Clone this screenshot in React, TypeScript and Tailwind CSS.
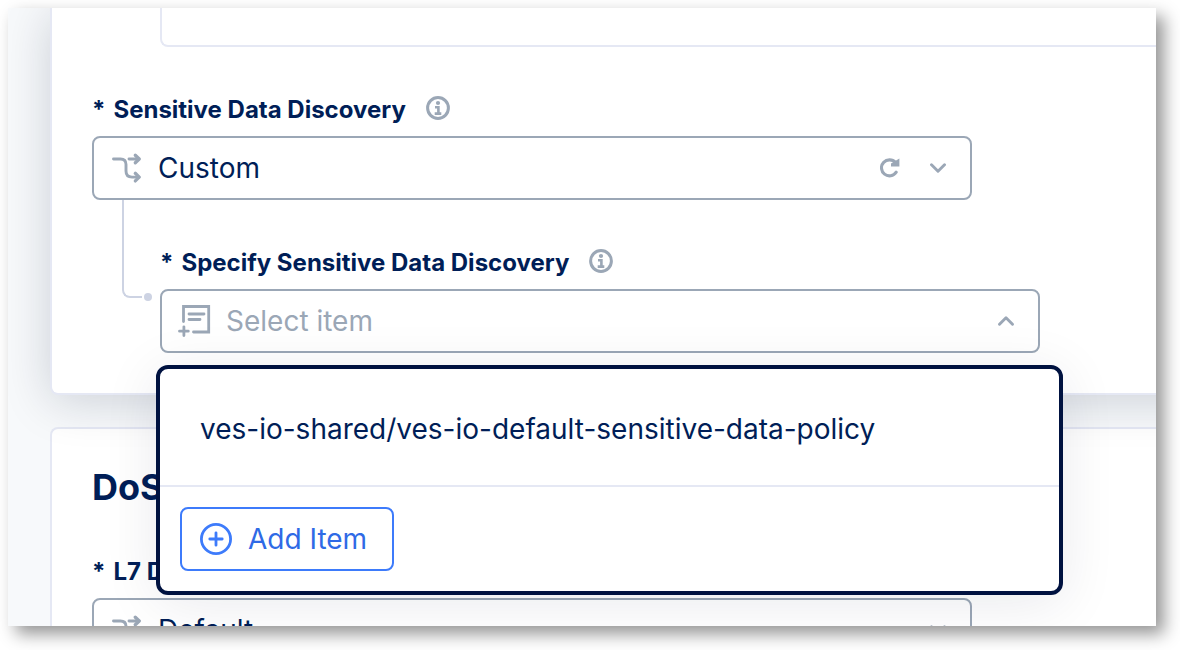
import React from "react";

function BranchIcon({ className = "" }: { className?: string }) {
  return (
    <svg viewBox="0 0 32 32" className={`size-8 ${className}`} fill="none" stroke="#9ba7b6" strokeWidth="2.9" strokeLinecap="round" strokeLinejoin="round" aria-hidden="true">
      <path d="M3.500 7H10.500C14.500 7 16 9 16 12.500V19C16 23 18 25.100 22 25.100H29" />
      <path d="M19 7H29" />
      <path d="M25.300 3.200L29.200 7L25.300 10.800" strokeWidth="3.300" />
      <path d="M25.300 21.300L29.200 25.100L25.300 28.900" strokeWidth="3.300" />
    </svg>
  );
}

function InfoIcon() {
  return (
    <svg viewBox="0 0 24 24" className="size-6" fill="none" stroke="#9ba7b6" strokeWidth="3" aria-hidden="true">
      <circle cx="12" cy="12" r="10.400" />
      <circle cx="12" cy="7" r="2.100" fill="#9ba7b6" stroke="none" />
      <path d="M9 11.200H12.400V17.500M8.700 17.600H15.300" strokeWidth="2.600" />
    </svg>
  );
}

function RefreshIcon() {
  return (
    <svg viewBox="0 0 20 20" className="size-5" fill="none" stroke="#9ba7b6" strokeWidth="3.100" strokeLinecap="round" aria-hidden="true">
      <path d="M16.200 14.200A8 8 0 1 1 15.500 4.600" />
      <path d="M19.400 0.400V8.600H11V5.500Z" fill="#9ba7b6" stroke="none" />
    </svg>
  );
}

function Chevron({ up = false }: { up?: boolean }) {
  return (
    <svg viewBox="0 0 16 16" className="size-4" fill="none" stroke="#9ba7b6" strokeWidth="2.900" strokeLinecap="round" strokeLinejoin="round" aria-hidden="true">
      <path d={up ? "M1.500 11.200L8 4.800L14.500 11.200" : "M1.500 4.800L8 11.200L14.500 4.800"} />
    </svg>
  );
}

function AddFormIcon() {
  return (
    <svg viewBox="0 0 34 34" className="size-[34px]" fill="none" stroke="#9ba7b6" strokeWidth="2.800" strokeLinecap="round" aria-hidden="true">
      <path d="M5.500 17.500V2.500H30.700V28H15.500" />
      <path d="M11 10H26M11 15.500H22" />
      <path d="M1.500 27.200H10.300M5.900 22.800V31.600" />
    </svg>
  );
}

function FieldLabel({ htmlFor, children, info = true }: { htmlFor: string; children: React.ReactNode; info?: boolean }) {
  return (
    <div className="mb-2 flex h-9 items-start gap-5">
      <label htmlFor={htmlFor} className="flex gap-2 text-2xl leading-9 font-bold whitespace-nowrap">
        <span aria-hidden="true">*</span>
        {children}
      </label>
      {info && (
        <button type="button" aria-label="More information" className="mt-1">
          <InfoIcon />
        </button>
      )}
    </div>
  );
}

function ChoiceField({ id, value, refresh = false }: { id: string; value: string; refresh?: boolean }) {
  return (
    <div className="grid h-16 max-w-[880px] items-center">
      <select
        id={id}
        defaultValue={value}
        className="col-start-1 row-start-1 h-16 w-full appearance-none rounded-lg border-2 border-[#9ba7b6] bg-transparent pl-16 text-[28px] outline-none"
      >
        <option>{value}</option>
      </select>
      <BranchIcon className="pointer-events-none col-start-1 row-start-1 ml-[18px]" />
      <div className="pointer-events-none col-start-1 row-start-1 mr-[26px] flex items-center gap-[30px] justify-self-end">
        {refresh && (
          <button type="button" aria-label="Refresh" className="pointer-events-auto">
            <RefreshIcon />
          </button>
        )}
        <Chevron />
      </div>
    </div>
  );
}

function PolicyMenu() {
  return (
    <div className="absolute top-full -right-[23px] -left-1 z-10 mt-3 rounded-xl border-4 border-[#001240] bg-white shadow-[0_8px_56px_rgba(0,20,60,0.09)]">
      <ul id="policy-list" role="listbox" aria-label="Policies" className="border-b-2 border-[#e5e8f4]">
        <li role="option" aria-selected="false" className="px-10 pt-[42px] pb-[38px] text-[28px] leading-9">
          ves-io-shared/ves-io-default-sensitive-data-policy
        </li>
      </ul>
      <div className="p-5">
        <button type="button" className="flex h-16 items-center gap-4 rounded-lg border-2 border-[#3d7bfb] pr-[25px] pl-[18px] text-[28px] text-[#2f6ae6]">
          <svg viewBox="0 0 32 32" className="size-8" fill="none" stroke="#3d7bfb" strokeWidth="2.800" strokeLinecap="round" aria-hidden="true">
            <circle cx="16" cy="16" r="14.600" />
            <path d="M16 9.800V22.200M9.800 16H22.200" />
          </svg>
          Add Item
        </button>
      </div>
    </div>
  );
}

export default function App() {
  return (
    <div className="h-screen bg-white pt-2 pr-6 pb-6 pl-2 font-['Inter','Liberation_Sans',sans-serif] text-[#001e57]">
      <main className="h-full overflow-hidden bg-[#f7f9fb] pl-[42px] shadow-[8px_8px_16px_rgba(0,0,0,0.42)]">
        <section className="relative z-10 -mr-16 rounded-bl-lg border-b-2 border-l-2 border-[#e5e8f4] bg-white pb-10 pl-10 shadow-[0_6px_48px_rgba(10,20,50,0.18)]">
          <input aria-label="Description" className="ml-[68px] block h-[39px] w-[calc(100%-68px)] rounded-bl-lg border-b-2 border-l-2 border-[#e5e8f4] px-4 outline-none" />
          <div className="pt-[45px]">
            <FieldLabel htmlFor="discovery">Sensitive Data Discovery</FieldLabel>
            <ChoiceField id="discovery" value="Custom" refresh />
          </div>
          <div className="flex">
            <div className="ml-[30px] flex h-[98px] w-[30px] items-end" aria-hidden="true">
              <div className="h-full w-5 rounded-bl-lg border-b-2 border-l-2 border-[#cdd3e3]" />
            </div>
            <div className="-ml-2 flex h-[101px] w-2 items-end" aria-hidden="true">
              <div className="size-2 rounded-full bg-[#cdd3e3]" />
            </div>
            <div className="ml-2 max-w-[880px] flex-1 pt-[45px]">
              <FieldLabel htmlFor="policy">Specify Sensitive Data Discovery</FieldLabel>
              <div className="relative z-20">
                <div className="flex h-16 items-center gap-[14px] rounded-lg border-2 border-[#9ba7b6] pr-6 pl-4">
                  <AddFormIcon />
                  <input
                    id="policy"
                    role="combobox"
                    aria-expanded="true"
                    aria-controls="policy-list"
                    placeholder="Select item"
                    className="min-w-0 flex-1 bg-transparent text-[28px] outline-none placeholder:text-[#9ba7b6]"
                  />
                  <Chevron up />
                </div>
                <PolicyMenu />
              </div>
            </div>
          </div>
        </section>
        <section className="mt-8 rounded-tl-lg border-t-2 border-l-2 border-[#e5e8f4] bg-white pt-[38px] pb-10 pl-10">
          <h2 className="mb-[47px] text-4xl leading-10 font-bold">DoS Protection</h2>
          <FieldLabel htmlFor="mitigation" info={false}>L7 DDoS Mitigation</FieldLabel>
          <ChoiceField id="mitigation" value="Default" />
        </section>
      </main>
    </div>
  );
}
